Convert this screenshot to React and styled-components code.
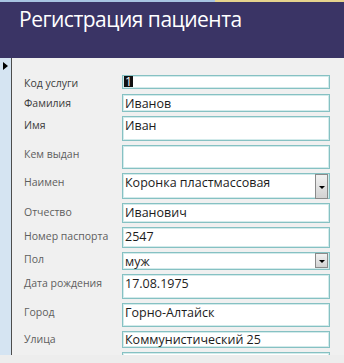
import React from "react";
import styled, { createGlobalStyle } from "styled-components";

const Global = createGlobalStyle`
  html, body { margin: 0; padding: 0; background: #ececec; }
  body { width: 344px; height: 363px; overflow: hidden; font-family: "Open Sans", "Noto Sans", sans-serif; }
`;

const Page = styled.div`
  width: 344px;
  height: 363px;
  display: flex;
  flex-direction: column;
  background: #ececec;
`;

const Header = styled.header`
  height: 58px;
  background: #3a3465;
  display: flex;
  flex-direction: column;
`;

const TopBand = styled.div`
  height: 2px;
  display: flex;
`;

const BandPart = styled.div`
  background: ${(p) => p.$color};
  flex: ${(p) => (p.$grow ? 1 : "none")};
  width: ${(p) => (p.$w ? `${p.$w}px` : "auto")};
`;

const Title = styled.h1`
  margin: 0;
  padding: 2px 0 0 19px;
  font-family: "Open Sans", "Noto Sans", sans-serif;
  font-weight: 400;
  font-size: 21px;
  line-height: 30px;
  color: #ffffff;
  letter-spacing: -0.5px;
`;

const Body = styled.div`
  height: 297px;
  display: flex;
`;

const Selector = styled.div`
  width: 12px;
  background: #d5e4f2;
  border-right: 1px solid #4d4d4d;
  display: flex;
  justify-content: center;
  padding-top: 4px;
  box-sizing: border-box;
`;

const Arrow = styled.div`
  width: 0;
  height: 0;
  border-top: 4px solid transparent;
  border-bottom: 4px solid transparent;
  border-left: 5px solid #000;
`;

const Panel = styled.div`
  flex: 1;
  background: #f0f0f0;
  overflow: hidden;
  display: grid;
  grid-template-columns: 98px 208px;
  grid-auto-rows: min-content;
  row-gap: 4px;
  padding: 17px 0 0 12px;
  align-content: start;
`;

const Label = styled.div`
  font-family: "Open Sans", "Noto Sans", sans-serif;
  font-size: 10.5px;
  line-height: 14px;
  padding-top: ${(p) => p.$top ?? 2}px;
  color: ${(p) => (p.$strong ? "#3c3c3c" : "#5e5e5e")};
  white-space: nowrap;
`;

const Box = styled.div`
  position: relative;
  box-sizing: border-box;
  height: ${(p) => p.$h}px;
  background: #ffffff;
  border: 1px solid #86c1c3;
  box-shadow: inset 0 0 0 1px #d3ebeb;
  padding: ${(p) => p.$pt ?? 1}px 0 0 2px;
  font-family: "Open Sans", "Noto Sans", sans-serif;
  font-size: 12.5px;
  line-height: ${(p) => p.$lh ?? 15}px;
  color: #1c1c1c;
  white-space: nowrap;
`;

const Selected = styled.span`
  display: inline-block;
  background: #111;
  color: #fff;
  padding: 0 1px;
  margin-left: -1px;
  line-height: 11px;
  vertical-align: top;
`;

const DropButton = styled.div`
  position: absolute;
  top: 0;
  right: 1px;
  width: 13px;
  height: ${(p) => p.$h}px;
  box-sizing: border-box;
  border: 1px solid #8a8a8a;
  background: linear-gradient(#f2f2f2, #d2d2d2);
  display: flex;
  align-items: center;
  justify-content: center;
`;

const DropTri = styled.div`
  width: 0;
  height: 0;
  margin-top: 2px;
  border-left: 3px solid transparent;
  border-right: 3px solid transparent;
  border-top: 3px solid #000;
`;

const Footer = styled.div`
  flex: 1;
  background: #ededed;
`;

const rows = [
  { label: "Код услуги", h: 14, strong: true, value: "1", sel: true, lt: 1, pt: 0, lh: 12 },
  { label: "Фамилия", h: 18, strong: true, value: "Иванов" },
  { label: "Имя", h: 25, strong: true, value: "Иван" },
  { label: "Кем выдан", h: 24, value: "" },
  { label: "Наимен", h: 26, value: "Коронка пластмассовая", drop: 25 },
  { label: "Отчество", h: 20, value: "Иванович" },
  { label: "Номер паспорта", h: 21, value: "2547" },
  { label: "Пол", h: 18, value: "муж", drop: 15, lt: 0 },
  { label: "Дата рождения", h: 25, value: "17.08.1975" },
  { label: "Город", h: 24, value: "Горно-Алтайск" },
  { label: "Улица", h: 17, value: "Коммунистический 25", lt: 1, pt: 0 },
  { label: "", h: 20, value: "" },
];

export default function App() {
  return (
    <Page>
      <Global />
      <Header>
        <TopBand>
          <BandPart $color="#a7c3e1" $w={215} />
          <BandPart $color="#e5d38d" $grow />
        </TopBand>
        <Title>Регистрация пациента</Title>
      </Header>
      <Body>
        <Selector>
          <Arrow />
        </Selector>
        <Panel>
          {rows.map((r, i) => (
            <React.Fragment key={i}>
              <Label $strong={r.strong} $top={r.lt}>
                {r.label}
              </Label>
              <Box $h={r.h} $pt={r.pt} $lh={r.lh}>
                {r.sel ? <Selected>{r.value}</Selected> : r.value}
                {r.drop ? (
                  <DropButton $h={r.drop}>
                    <DropTri />
                  </DropButton>
                ) : null}
              </Box>
            </React.Fragment>
          ))}
        </Panel>
      </Body>
      <Footer />
    </Page>
  );
}
